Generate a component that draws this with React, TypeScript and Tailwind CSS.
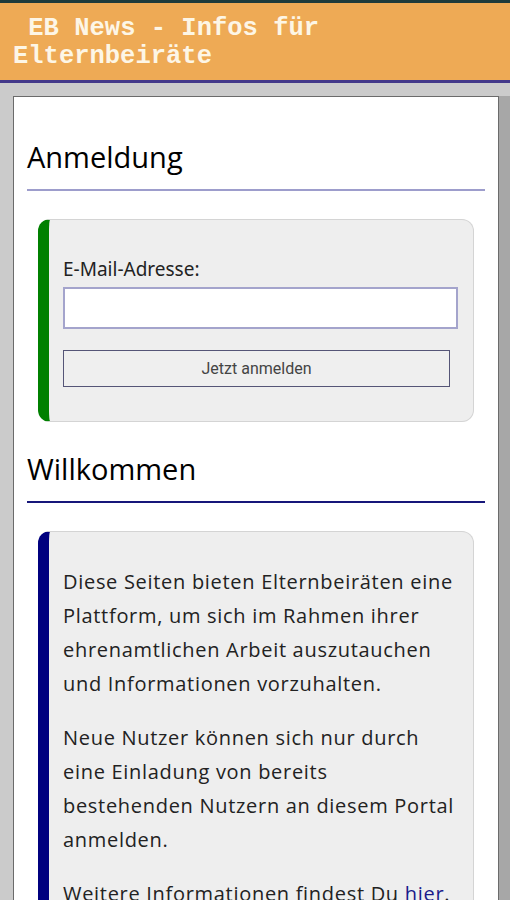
const bodyFont = { fontFamily: '"Open Sans", "Noto Sans", sans-serif' };

const SectionTitle = ({ children, line }: { children: string; line: string }) => (
  <h2
    className={`mx-[13px] pb-[12px] text-[29px] leading-[40px] font-medium text-black border-b-2 ${line}`}
    style={bodyFont}
  >
    {children}
  </h2>
);

export default function App() {
  return (
    <div className="h-[900px] bg-[#cbcbcb] overflow-hidden">
      <header className="border-t-[3px] border-b-[3px] border-t-[#1e3b3b] border-b-[#44398a] bg-[#eeaa55] pl-[13px] pr-4 pt-[12px] pb-[9px]">
        <h1
          className="text-[25.5px] leading-[28px] font-bold text-[#fdf6e6]"
          style={{ fontFamily: '"Liberation Mono", monospace' }}
        >
          {"\u00a0"}EB News - Infos für Elternbeiräte
        </h1>
      </header>

      <main className="mt-[13px] ml-[13px] w-[486px] bg-white border border-[#6b6b6b] shadow-[12px_0_0_0_#a7a7a7] pt-[40px] pb-10">
        <SectionTitle line="border-[#9d9dcc]">Anmeldung</SectionTitle>

        <div className="mx-[24px] mt-[28px] rounded-xl border border-[#d4d4d4] border-l-[11px] border-l-[#008000] bg-[#eeeeee] pl-[14px] pr-[12px] pt-[37px] pb-[34px]">
          <label
            className="block text-[19px] leading-[24px] text-[#222]"
            style={{ fontFamily: '"Noto Sans", "DejaVu Sans", sans-serif' }}
          >
            E-Mail-Adresse:
          </label>
          <input
            type="email"
            className="mt-[6px] block h-[42px] w-[395px] bg-white border-2 border-[#a4a4cc] outline-none"
          />
          <button
            className="mt-[21px] block h-[37px] w-[387px] border border-[#555577] bg-[#efefef] text-[16px] text-[#444]"
            style={{ fontFamily: 'Roboto, sans-serif' }}
          >
            Jetzt anmelden
          </button>
        </div>

        <div className="mt-[27px]">
          <SectionTitle line="border-[#17177a]">Willkommen</SectionTitle>
        </div>

        <div
          className="mx-[24px] mt-[28px] rounded-xl border border-[#d4d4d4] border-l-[11px] border-l-[#00007f] bg-[#eeeeee] pl-[14px] pr-[15px] pt-[33px] pb-6 text-[20px] leading-[34px] tracking-[0.7px] text-[#222]"
          style={bodyFont}
        >
          <p>Diese Seiten bieten Elternbeiräten eine Plattform, um sich im Rahmen ihrer ehrenamtlichen Arbeit auszutauchen und Informationen vorzuhalten.</p>
          <p className="mt-5">Neue Nutzer können sich nur durch eine Einladung von bereits bestehenden Nutzern an diesem Portal anmelden.</p>
          <p className="mt-5">
            Weitere Informationen findest Du <a href="#" className="text-[#1a1a8a]">hier</a>.
          </p>
        </div>
      </main>
    </div>
  );
}
